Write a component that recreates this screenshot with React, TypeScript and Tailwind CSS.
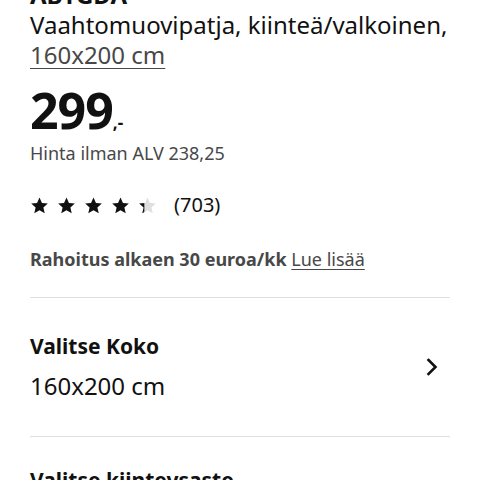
import { ReactNode } from "react";

const STAR = "M12 1.8l3.1 6.9 7.4.7-5.6 5 1.7 7.4L12 17.9l-6.6 3.9 1.7-7.4-5.6-5 7.4-.7z";

function Star({ half = false }: { half?: boolean }) {
  return (
    <svg width="19" height="19" viewBox="0 0 24 24" className="shrink-0">
      <defs>
        <clipPath id="half-star">
          <rect x="0" y="0" width="8" height="24" />
        </clipPath>
      </defs>
      {half ? (
        <>
          <path d={STAR} fill="#dfdfdf" />
          <path d={STAR} fill="#111111" clipPath="url(#half-star)" />
        </>
      ) : (
        <path d={STAR} fill="#111111" />
      )}
    </svg>
  );
}

function OptionRow({ label, value }: { label: string; value: ReactNode }) {
  return (
    <div className="flex items-center justify-between pt-[34px] pb-[35px]">
      <div className="flex flex-col">
        <span className="text-[21px] leading-[28px] font-bold text-[#111111]">{label}</span>
        <span className="mt-[11px] text-[24px] leading-[30px] text-[#111111]">{value}</span>
      </div>
      <svg width="24" height="24" viewBox="0 0 24 24" className="mr-[7px]">
        <path d="M9.5 5l7 7-7 7" fill="none" stroke="#111111" strokeWidth="2.6" strokeLinecap="square" />
      </svg>
    </div>
  );
}

export default function App() {
  return (
    <div className="h-[480px] w-[480px] overflow-hidden bg-white px-[30px] font-['Noto_Sans',sans-serif] text-[#111111]">
      <div className="-mt-[20px]">
        <h1 className="text-[24px] leading-[30px] font-bold">ABTGDA</h1>
        <p className="text-[24px] leading-[30px]">
          Vaahtomuovipatja, kiinteä/valkoinen,{" "}
          <span className="text-[#484848] underline decoration-1 underline-offset-[4px]">160x200 cm</span>
        </p>
      </div>

      <div className="mt-[10px] flex items-baseline">
        <span className="text-[50px] leading-[60px] font-bold tracking-[-1px]">299</span>
        <span className="text-[17px] font-bold">,-</span>
      </div>

      <p className="text-[18px] leading-[26px] text-[#484848]">Hinta ilman ALV 238,25</p>

      <div className="mt-[25px] flex h-[28px] items-center">
        <div className="flex items-center gap-[8px]">
          <Star />
          <Star />
          <Star />
          <Star />
          <Star half />
        </div>
        <span className="ml-[17px] text-[20px] leading-[28px] text-[#111111]">(703)</span>
      </div>

      <p className="mt-[28px] text-[18px] leading-[24px] text-[#484848]">
        <span className="font-bold">Rahoitus alkaen 30 euroa/kk</span>{" "}
        <span className="underline decoration-1 underline-offset-[3px]">Lue lisää</span>
      </p>

      <div className="mt-[26px] h-px bg-[#dfdfdf]" />
      <OptionRow label="Valitse Koko" value="160x200 cm" />
      <div className="h-px bg-[#dfdfdf]" />
      <div className="pt-[29px]">
        <span className="text-[21px] leading-[28px] font-bold">Valitse kiinteysaste</span>
      </div>
    </div>
  );
}
